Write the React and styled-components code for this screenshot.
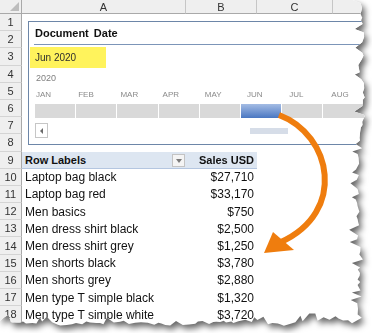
import React from 'react';
import styled, { createGlobalStyle } from 'styled-components';

const GlobalStyle = createGlobalStyle`
  html, body {
    margin: 0;
    padding: 0;
    background: #ffffff;
  }
  body {
    font-family: "Liberation Sans", Arial, sans-serif;
  }
`;

const COLS = '22px 164px 71px 76px 60px';
const ROW_H = 17.2;

// jagged "torn paper" outline for the right and bottom edges
function tornEdge() {
  let seed = 11;
  const rnd = () => {
    seed = (seed * 9301 + 49297) % 233280;
    return seed / 233280;
  };
  const pts = ['0px 0px'];
  let y = 0;
  let drift = 0;
  while (y < 318) {
    drift = Math.max(-3, Math.min(3, drift + (rnd() - 0.5) * 3));
    const spike = rnd() > 0.75 ? -5 - rnd() * 4 : 0;
    const x = 358 + drift + rnd() * 4 + spike;
    pts.push(`${x.toFixed(1)}px ${y.toFixed(1)}px`);
    y += 2 + rnd() * 4;
  }
  let x = 352;
  drift = 0;
  while (x > 0) {
    drift = Math.max(-3, Math.min(3, drift + (rnd() - 0.5) * 3));
    const spike = rnd() > 0.8 ? -4 - rnd() * 4 : 0;
    const yy = 320 + drift + rnd() * 3 + spike;
    pts.push(`${x.toFixed(1)}px ${yy.toFixed(1)}px`);
    x -= 2 + rnd() * 5;
  }
  pts.push('0px 321px');
  return `polygon(${pts.join(', ')})`;
}

const Frame = styled.div`
  width: 372px;
  height: 333px;
  filter: drop-shadow(3px 4px 3px rgba(0, 0, 0, 0.6));
`;

const Sheet = styled.div`
  position: relative;
  width: 372px;
  height: 333px;
  background: #ffffff;
  overflow: hidden;
  clip-path: ${p => p.$clip};
`;

const Row = styled.div`
  display: grid;
  grid-template-columns: ${COLS};
  height: ${p => p.$h}px;
`;

const ColHead = styled.div`
  position: relative;
  background: #efefef;
  border-right: 1px solid #c6c6c6;
  border-bottom: 1px solid #a9a9a9;
  font-size: 11px;
  color: #333;
  display: flex;
  align-items: center;
  justify-content: center;
  box-sizing: border-box;
`;

const Corner = styled(ColHead)`
  border-right: 1px solid #a9a9a9;
  &::after {
    content: '';
    position: absolute;
    right: 2px;
    bottom: 2px;
    border-left: 9px solid transparent;
    border-bottom: 9px solid #bdbdbd;
  }
`;

const RowNum = styled.div`
  background: #efefef;
  border-right: 1px solid #a9a9a9;
  border-bottom: 1px solid #d4d4d4;
  font-size: 11px;
  color: #333;
  display: flex;
  align-items: center;
  justify-content: center;
  box-sizing: border-box;
`;

const Cell = styled.div`
  position: relative;
  display: flex;
  align-items: center;
  justify-content: ${p => (p.$right ? 'flex-end' : 'flex-start')};
  padding: 0 ${p => (p.$right ? 3 : 0)}px 0 ${p => (p.$right ? 0 : 3)}px;
  font-size: 12px;
  color: #111;
  white-space: nowrap;
  box-sizing: border-box;
  ${p =>
    p.$head &&
    `
    background: #dde6f1;
    border-bottom: 1px solid #b4c6e0;
    font-weight: bold;
    font-size: 11px;
  `}
`;

const FilterButton = styled.span`
  position: absolute;
  right: 1px;
  top: 2px;
  width: 13px;
  height: 13px;
  box-sizing: border-box;
  border: 1px solid #c3c3c3;
  background: #f4f4f4;
  &::after {
    content: '';
    position: absolute;
    left: 3px;
    top: 4px;
    border-left: 3px solid transparent;
    border-right: 3px solid transparent;
    border-top: 4px solid #7a7a7a;
  }
`;

const Slicer = styled.div`
  position: absolute;
  left: 28px;
  top: 21px;
  width: 350px;
  height: 124px;
  box-sizing: border-box;
  border: 1px solid #6d86a8;
  background: #ffffff;
  display: flex;
  flex-direction: column;
  overflow: hidden;
`;

const SlicerTitle = styled.div`
  height: 23px;
  box-sizing: border-box;
  margin-left: 5px;
  padding-left: 1px;
  border-bottom: 1px solid #7c95b8;
  display: flex;
  align-items: center;
  font-size: 11px;
  font-weight: bold;
  color: #111;
  word-spacing: 2px;
`;

const Selection = styled.div`
  margin: 2px 0 0 1px;
  width: 76px;
  height: 21px;
  padding-left: 5px;
  box-sizing: border-box;
  background: #fff35c;
  display: flex;
  align-items: center;
  font-size: 10px;
  color: #2e2e2e;
`;

const Year = styled.div`
  margin: 4px 0 0 7px;
  height: 12px;
  line-height: 12px;
  font-size: 9px;
  color: #7f7f7f;
`;

const Months = styled.div`
  display: flex;
  margin-left: 6px;
  height: 20px;
`;

const Month = styled.div`
  flex: 0 0 41.2px;
  padding-left: 1px;
  line-height: 22px;
  font-size: 8px;
  color: #8a8a8a;
`;

const Bar = styled.div`
  display: flex;
  gap: 1px;
  margin-left: 6px;
  height: 14px;
`;

const Period = styled.div`
  flex: 0 0 40.2px;
  background: ${p =>
    p.$active ? 'linear-gradient(#a4bce4, #4a77c2)' : '#d9d9d9'};
`;

const ScrollRow = styled.div`
  display: flex;
  align-items: center;
  margin: 5px 0 0 6px;
  height: 15px;
`;

const ScrollButton = styled.div`
  position: relative;
  width: 13px;
  height: 15px;
  box-sizing: border-box;
  border: 1px solid #c6c6c6;
  &::after {
    content: '';
    position: absolute;
    left: 4px;
    top: 4px;
    border-top: 3px solid transparent;
    border-bottom: 3px solid transparent;
    border-right: 3px solid #6a6a6a;
  }
`;

const ScrollThumb = styled.div`
  margin-left: 202px;
  width: 38px;
  height: 6px;
  background: #d6dde8;
`;

const ArrowLayer = styled.svg`
  position: absolute;
  left: 0;
  top: 0;
  pointer-events: none;
`;

const months = ['JAN', 'FEB', 'MAR', 'APR', 'MAY', 'JUN', 'JUL', 'AUG'];

const data = [
  ['Laptop bag black', '$27,710'],
  ['Laptop bag red', '$33,170'],
  ['Men basics', '$750'],
  ['Men dress shirt black', '$2,500'],
  ['Men dress shirt grey', '$1,250'],
  ['Men shorts black', '$3,780'],
  ['Men shorts grey', '$2,880'],
  ['Men type T simple black', '$1,320'],
  ['Men type T simple white', '$3,720'],
];

export default function App() {
  const clip = React.useMemo(() => tornEdge(), []);

  return (
    <>
      <GlobalStyle />
      <Frame>
        <Sheet $clip={clip}>
          <Row $h={14}>
            <Corner />
            <ColHead>A</ColHead>
            <ColHead>B</ColHead>
            <ColHead>C</ColHead>
            <ColHead />
          </Row>

          {[1, 2, 3, 4, 5, 6, 7, 8].map(n => (
            <Row key={n} $h={ROW_H}>
              <RowNum>{n}</RowNum>
              <Cell />
              <Cell />
              <Cell />
              <Cell />
            </Row>
          ))}

          <Row $h={ROW_H}>
            <RowNum>9</RowNum>
            <Cell $head>
              Row Labels
              <FilterButton />
            </Cell>
            <Cell $head $right>Sales USD</Cell>
            <Cell />
            <Cell />
          </Row>

          {data.map(([label, value], i) => (
            <Row key={label} $h={ROW_H}>
              <RowNum>{i + 10}</RowNum>
              <Cell>{label}</Cell>
              <Cell $right>{value}</Cell>
              <Cell />
              <Cell />
            </Row>
          ))}

          <Slicer>
            <SlicerTitle>Document Date</SlicerTitle>
            <Selection>Jun 2020</Selection>
            <Year>2020</Year>
            <Months>
              {months.map(m => (
                <Month key={m}>{m}</Month>
              ))}
            </Months>
            <Bar>
              {months.map(m => (
                <Period key={m} $active={m === 'JUN'} />
              ))}
            </Bar>
            <ScrollRow>
              <ScrollButton />
              <ScrollThumb />
            </ScrollRow>
          </Slicer>

          <ArrowLayer width="372" height="333" viewBox="0 0 372 333">
            <path
              d="M279 115 C 332 135 347 212 281 242"
              fill="none"
              stroke="#ef7d0e"
              strokeWidth="6"
            />
            <polygon points="264,253 273,232 294,250" fill="#ef7d0e" />
          </ArrowLayer>
        </Sheet>
      </Frame>
    </>
  );
}
